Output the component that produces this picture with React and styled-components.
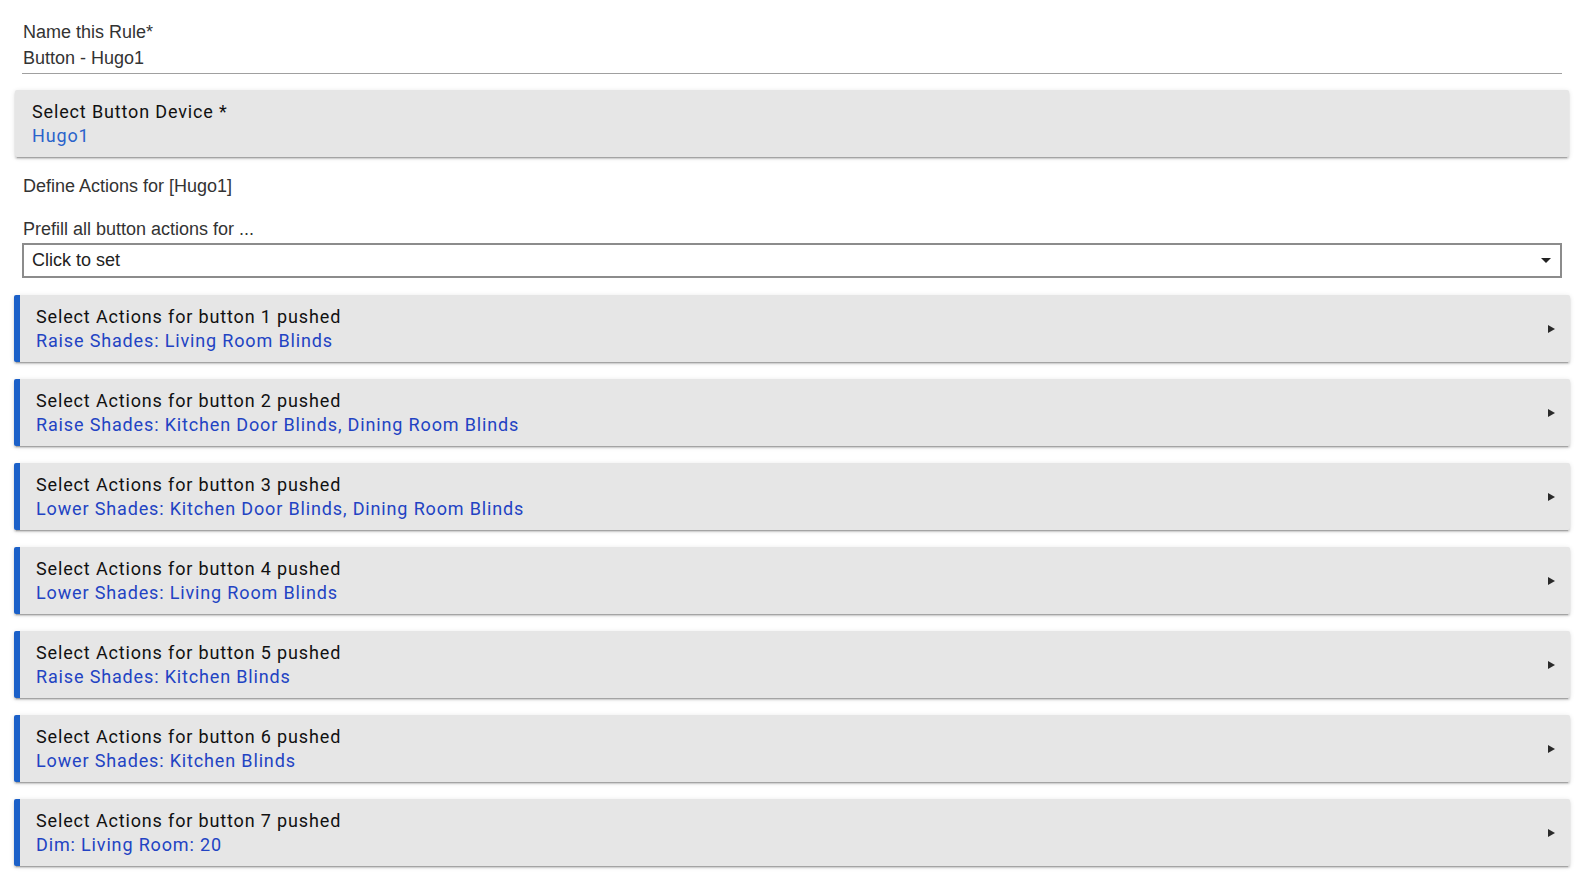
import React from "react";
import styled, { createGlobalStyle } from "styled-components";

const Global = createGlobalStyle`
  html, body { margin: 0; padding: 0; background: #fff; }
  body { font-family: "Liberation Sans", Arial, sans-serif; color: #333; }
`;

const Page = styled.div`
  padding: 22px 24px 20px 22px;
  display: flex;
  flex-direction: column;
`;

const Label = styled.div`
  font-size: 18px;
  line-height: 21px;
  color: #333;
  padding-left: 1px;
`;

const NameField = styled.div`
  display: flex;
  flex-direction: column;
  gap: 5px;
  border-bottom: 1px solid #a0a0a0;
  padding-bottom: 4px;
`;

const Value = styled.div`
  font-size: 18px;
  line-height: 21px;
  color: #333;
  padding-left: 1px;
`;

const Card = styled.div`
  display: flex;
  align-items: center;
  margin: ${(p) => p.$mt || 0}px ${(p) => (p.$accent ? -8 : -7)}px 0;
  height: 67px;
  background: #e6e6e6;
  border-radius: 2px;
  border-left: ${(p) => (p.$accent ? "6px solid #1b60c8" : "none")};
  padding-left: ${(p) => (p.$accent ? 16 : 17)}px;
  padding-right: 14px;
  box-shadow: 0 2px 2px 0 rgba(0, 0, 0, 0.14), 0 3px 1px -2px rgba(0, 0, 0, 0.2),
    0 1px 5px 0 rgba(0, 0, 0, 0.12);
  box-sizing: border-box;
`;

const CardText = styled.div`
  flex: 1;
  display: flex;
  flex-direction: column;
  font-family: Roboto, "Liberation Sans", sans-serif;
  font-size: 18px;
  letter-spacing: 0.85px;
  line-height: 24px;
`;

const CardTitle = styled.div`
  color: #111;
`;

const CardValue = styled.div`
  color: ${(p) => p.$color || "#2243c3"};
`;

const Arrow = styled.span`
  width: 0;
  height: 0;
  border-top: 4px solid transparent;
  border-bottom: 4px solid transparent;
  border-left: 7px solid #2a2a2a;
  margin-right: 1px;
`;

const Section = styled.div`
  font-size: 18px;
  line-height: 21px;
  color: #333;
  padding-left: 1px;
  margin-top: ${(p) => p.$mt}px;
`;

const SelectBox = styled.div`
  margin-top: 3px;
  height: 35px;
  box-sizing: border-box;
  border: 2px solid #8c8c8c;
  display: flex;
  align-items: center;
  padding: 0 9px 0 8px;
  font-size: 18px;
  color: #222;
`;

const SelectText = styled.span`
  flex: 1;
`;

const Caret = styled.span`
  width: 0;
  height: 0;
  border-left: 5px solid transparent;
  border-right: 5px solid transparent;
  border-top: 5px solid #222;
`;

const actions = [
  "Raise Shades: Living Room Blinds",
  "Raise Shades: Kitchen Door Blinds, Dining Room Blinds",
  "Lower Shades: Kitchen Door Blinds, Dining Room Blinds",
  "Lower Shades: Living Room Blinds",
  "Raise Shades: Kitchen Blinds",
  "Lower Shades: Kitchen Blinds",
  "Dim: Living Room: 20",
];

export default function App() {
  return (
    <>
      <Global />
      <Page>
        <NameField>
          <Label>Name this Rule*</Label>
          <Value>Button - Hugo1</Value>
        </NameField>
        <Card $mt={16}>
          <CardText>
            <CardTitle>Select Button Device *</CardTitle>
            <CardValue $color="#2a63cb">Hugo1</CardValue>
          </CardText>
        </Card>
        <Section $mt={19}>Define Actions for [Hugo1]</Section>
        <Section $mt={22}>Prefill all button actions for ...</Section>
        <SelectBox>
          <SelectText>Click to set</SelectText>
          <Caret />
        </SelectBox>
        {actions.map((a, i) => (
          <Card key={i} $accent $mt={17}>
            <CardText>
              <CardTitle>Select Actions for button {i + 1} pushed</CardTitle>
              <CardValue>{a}</CardValue>
            </CardText>
            <Arrow />
          </Card>
        ))}
      </Page>
    </>
  );
}
